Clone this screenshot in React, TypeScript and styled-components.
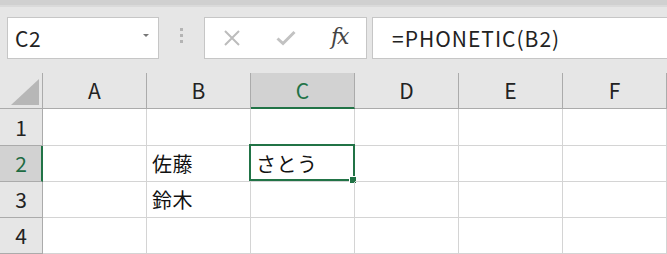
import React from 'react';
import styled, { createGlobalStyle } from 'styled-components';

const GlobalStyle = createGlobalStyle`
    html, body {
        margin: 0;
        padding: 0;
        background: #ffffff;
    }
    body {
        font-family: "Noto Sans CJK JP", "Noto Sans", sans-serif;
    }
`;

const GREEN = '#217346';

const columns = ['A', 'B', 'C', 'D', 'E', 'F'];
const rows: string[][] = [
    ['', '', '', '', '', ''],
    ['', '佐藤', 'さとう', '', '', ''],
    ['', '鈴木', '', '', '', ''],
    ['', '', '', '', '', ''],
];
const activeCol = 2;
const activeRow = 1;

const App = () => {
    return (
        <Page>
            <GlobalStyle />
            <TopStrip />
            <Toolbar>
                <NameBox>
                    <NameText>C2</NameText>
                    <DropArrow />
                </NameBox>
                <Grip>
                    <GripDot />
                    <GripDot />
                    <GripDot />
                </Grip>
                <FormulaButtons>
                    <IconSlot>
                        <svg width="18" height="18" viewBox="0 0 18 18">
                            <path d="M2 2 L16 16 M16 2 L2 16" stroke="#bcbcbc" strokeWidth="2" fill="none" />
                        </svg>
                    </IconSlot>
                    <IconSlot>
                        <svg width="20" height="16" viewBox="0 0 20 16">
                            <path d="M1.5 8.5 L7 13.5 L18.5 2" stroke="#c2c2c2" strokeWidth="3" fill="none" />
                        </svg>
                    </IconSlot>
                    <IconSlot>
                        <FxText>fx</FxText>
                    </IconSlot>
                </FormulaButtons>
                <FormulaInput>=PHONETIC(B2)</FormulaInput>
            </Toolbar>
            <Sheet>
                <Corner>
                    <svg width="30" height="28" viewBox="0 0 30 28">
                        <polygon points="29,1 29,27 1,27" fill="#b7b7b7" />
                    </svg>
                </Corner>
                {columns.map((c, i) => (
                    <ColHeader key={c} $active={i === activeCol}>
                        {c}
                    </ColHeader>
                ))}
                {rows.map((row, r) => (
                    <React.Fragment key={r}>
                        <RowHeader $active={r === activeRow}>{r + 1}</RowHeader>
                        {row.map((value, c) => (
                            <Cell key={c}>
                                {value}
                                {r === activeRow && c === activeCol && (
                                    <Selection>
                                        <FillHandle />
                                    </Selection>
                                )}
                            </Cell>
                        ))}
                    </React.Fragment>
                ))}
            </Sheet>
        </Page>
    );
};

export default App;

const Page = styled.div`
    width: 667px;
    height: 254px;
    overflow: hidden;
    background: #e6e6e6;
`;

const TopStrip = styled.div`
    height: 5px;
    background: #d0d0d0;
    border-bottom: 2px solid #dadada;
`;

const Toolbar = styled.div`
    height: 66px;
    box-sizing: border-box;
    padding: 10px 0 0 7px;
    display: flex;
    align-items: flex-start;
    background: #e6e6e6;
`;

const Box = styled.div`
    box-sizing: border-box;
    height: 42px;
    background: #ffffff;
    border: 1px solid #c6c6c6;
    display: flex;
    align-items: center;
`;

const NameBox = styled(Box)`
    width: 152px;
    padding: 0 9px 0 7px;
    justify-content: space-between;
`;

const NameText = styled.span`
    font-size: 21px;
    color: #222222;
    line-height: 1;
    letter-spacing: 0.5px;
`;

const DropArrow = styled.span`
    width: 0;
    height: 0;
    border-left: 3px solid transparent;
    border-right: 3px solid transparent;
    border-top: 3px solid #777777;
    margin-top: -6px;
`;

const Grip = styled.div`
    width: 45px;
    height: 42px;
    display: flex;
    flex-direction: column;
    align-items: center;
    justify-content: center;
    gap: 3px;
    padding-bottom: 6px;
    box-sizing: border-box;
`;

const GripDot = styled.span`
    width: 3px;
    height: 3px;
    background: #b4b4b4;
`;

const FormulaButtons = styled(Box)`
    width: 163px;
`;

const IconSlot = styled.div`
    width: 54px;
    height: 100%;
    display: flex;
    align-items: center;
    justify-content: center;
`;

const FxText = styled.span`
    font-family: "DejaVu Serif", "Liberation Serif", serif;
    font-style: italic;
    font-size: 22px;
    color: #444444;
    letter-spacing: -2px;
    margin-top: -4px;
`;

const FormulaInput = styled(Box)`
    flex: 1;
    margin-left: 5px;
    padding-left: 19px;
    border-right: none;
    font-size: 21px;
    letter-spacing: 1px;
    color: #222222;
    white-space: nowrap;
`;

const Sheet = styled.div`
    display: grid;
    grid-template-columns: 43px repeat(6, 104px);
    grid-template-rows: 36px 37px 36px 36px 36px;
    background: #ffffff;
`;

const HeaderBase = styled.div`
    box-sizing: border-box;
    display: flex;
    align-items: center;
    justify-content: center;
    font-size: 21px;
    line-height: 1;
`;

const Corner = styled(HeaderBase)`
    background: #e6e6e6;
    border-right: 1px solid #ababab;
    border-bottom: 1px solid #ababab;
    justify-content: flex-end;
    align-items: flex-end;
    padding: 0 2px 2px 0;
`;

const ColHeader = styled(HeaderBase)<{ $active: boolean }>`
    background: ${(p) => (p.$active ? '#d2d2d2' : '#e6e6e6')};
    color: ${(p) => (p.$active ? GREEN : '#222222')};
    border-right: 1px solid #ababab;
    border-bottom: ${(p) => (p.$active ? `2px solid ${GREEN}` : '1px solid #ababab')};
    padding-top: ${(p) => (p.$active ? '1px' : '0')};
`;

const RowHeader = styled(HeaderBase)<{ $active: boolean }>`
    background: ${(p) => (p.$active ? '#d2d2d2' : '#e6e6e6')};
    color: ${(p) => (p.$active ? '#1d6b43' : '#222222')};
    border-right: ${(p) => (p.$active ? `2px solid ${GREEN}` : '1px solid #ababab')};
    border-bottom: 1px solid #ababab;
    padding-left: ${(p) => (p.$active ? '1px' : '0')};
`;

const Cell = styled.div`
    position: relative;
    box-sizing: border-box;
    border-right: 1px solid #d4d4d4;
    border-bottom: 1px solid #d4d4d4;
    display: flex;
    align-items: center;
    padding: 0 0 1px 5px;
    font-size: 20px;
    letter-spacing: 0.5px;
    color: #111111;
    white-space: nowrap;
`;

const Selection = styled.div`
    position: absolute;
    top: -2px;
    left: -2px;
    width: calc(100% + 3px);
    height: calc(100% + 2px);
    border: 2px solid ${GREEN};
    box-sizing: border-box;
    pointer-events: none;
`;

const FillHandle = styled.div`
    position: absolute;
    right: -3px;
    bottom: -4px;
    width: 6px;
    height: 6px;
    background: ${GREEN};
    outline: 1px solid #ffffff;
`;
